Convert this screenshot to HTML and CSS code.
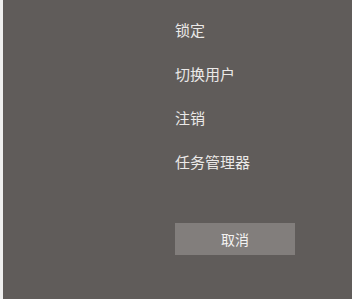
FILE: index.html
```html
<!DOCTYPE html>
<html>

<head>
    <title>Ctrl Alt Del</title>
    <link rel="stylesheet" href="styles.css">
</head>

<body>
    <div class="screen">
        <ul class="options">
            <li class="option">锁定</li>
            <li class="option">切换用户</li>
            <li class="option">注销</li>
            <li class="option">任务管理器</li>
        </ul>
        <button class="cancel-button" type="button">取消</button>
    </div>
</body>

</html>
```

FILE: styles.css
```css
html,
body {
    margin: 0;
    height: 100%;
}

body {
    background-color: #efefef;
    padding-left: 3px;
    box-sizing: border-box;
    font-family: "Noto Sans CJK SC", "Noto Sans", sans-serif;
}

.screen {
    height: 100%;
    background-color: #605c5a;
    padding-left: 172px;
    padding-top: 8px;
    box-sizing: border-box;
}

.options {
    list-style: none;
    margin: 0;
    padding: 0;
}

.option {
    font-size: 15px;
    line-height: 44px;
    height: 44px;
    color: #ebe9e8;
}

.cancel-button {
    display: block;
    margin-top: 39px;
    width: 120px;
    height: 32px;
    border: 0;
    background-color: #827e7c;
    color: #f4f3f2;
    font-family: "Noto Sans CJK SC", "Noto Sans", sans-serif;
    font-size: 14px;
    padding: 0;
}
```
